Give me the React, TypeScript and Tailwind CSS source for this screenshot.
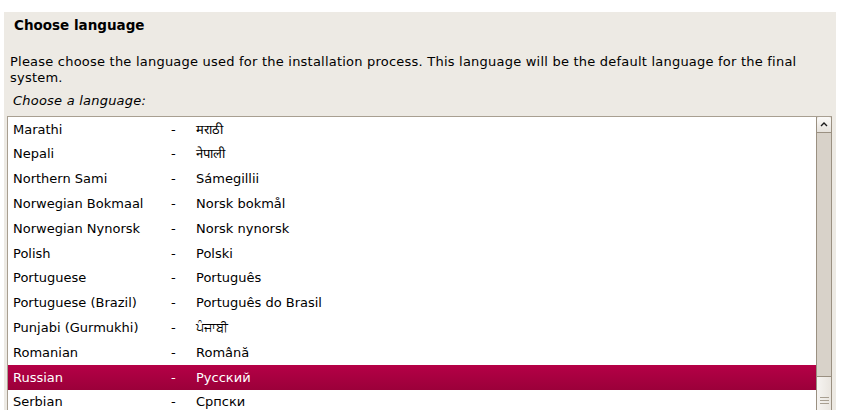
const languages: [string, string][] = [
  ["Marathi", "मराठी"],
  ["Nepali", "नेपाली"],
  ["Northern Sami", "Sámegillii"],
  ["Norwegian Bokmaal", "Norsk bokmål"],
  ["Norwegian Nynorsk", "Norsk nynorsk"],
  ["Polish", "Polski"],
  ["Portuguese", "Português"],
  ["Portuguese (Brazil)", "Português do Brasil"],
  ["Punjabi (Gurmukhi)", "ਪੰਜਾਬੀ"],
  ["Romanian", "Română"],
  ["Russian", "Русский"],
  ["Serbian", "Српски"],
]

const selected = "Russian"

function Scrollbar() {
  return (
    <div className="w-[16px] h-full flex flex-col bg-[#d8d2c9] border-x border-[#9a9081]">
      {/* up arrow */}
      <div className="h-[16px] shrink-0 flex items-center justify-center bg-gradient-to-b from-[#fbfaf8] to-[#e6e2dc] border-b border-[#9a9081] rounded-t-[2px]">
        <svg width="8" height="5" viewBox="0 0 8 5">
          <path d="M1 4 L4 1 L7 4" stroke="#1a1a1a" strokeWidth="1.4" fill="none" />
        </svg>
      </div>
      <div className="flex-1" />
      {/* thumb */}
      <div className="h-[34px] shrink-0 flex items-end justify-center pb-[6px] bg-gradient-to-r from-[#f6f4f1] to-[#e9e5df] border-t border-[#9a9081]">
        <svg width="9" height="8" viewBox="0 0 9 8">
          <path d="M0 1.5 H9 M0 4.5 H9 M0 7.5 H9" stroke="#a89f91" strokeWidth="1" />
        </svg>
      </div>
    </div>
  )
}

export default function App() {
  return (
    <div className="w-[857px] h-[410px] bg-white overflow-hidden pt-[12px] pl-[4px] font-['DejaVu_Sans',sans-serif] text-black">
      <div className="w-[832px] h-[398px] bg-[#edeae4] flex flex-col">
        <h1 className="shrink-0 pl-[10px] pt-[5px] h-[32px] text-[13.5px] font-bold leading-[16px]">Choose language</h1>
        <p className="shrink-0 pl-[6px] pt-[10px] text-[13px] tracking-[0.22px] leading-[16px] pr-[10px]">
          Please choose the language used for the installation process. This language will be the default language for the final system.
        </p>
        <p className="shrink-0 pl-[9px] pt-[7px] text-[13px] tracking-[0.22px] italic leading-[16px]">Choose a language:</p>
        <div className="mt-[7px] ml-[3px] w-[825px] flex-1 min-h-0 flex bg-white border-l border-t border-[#a89f91]">
          <div className="flex-1 flex flex-col overflow-hidden">
            {languages.map(([name, native]) => (
              <div
                key={name}
                className={`h-[24.8px] shrink-0 flex items-center text-[13px] ${
                  name === selected
                    ? "bg-gradient-to-b from-[#b50046] to-[#9b003a] text-white"
                    : ""
                }`}
              >
                <span className="w-[163px] pl-[5px]">{name}</span>
                <span className="w-[24px]">-</span>
                <span className="pl-[1px]">{native}</span>
              </div>
            ))}
          </div>
          <Scrollbar />
        </div>
      </div>
    </div>
  )
}
